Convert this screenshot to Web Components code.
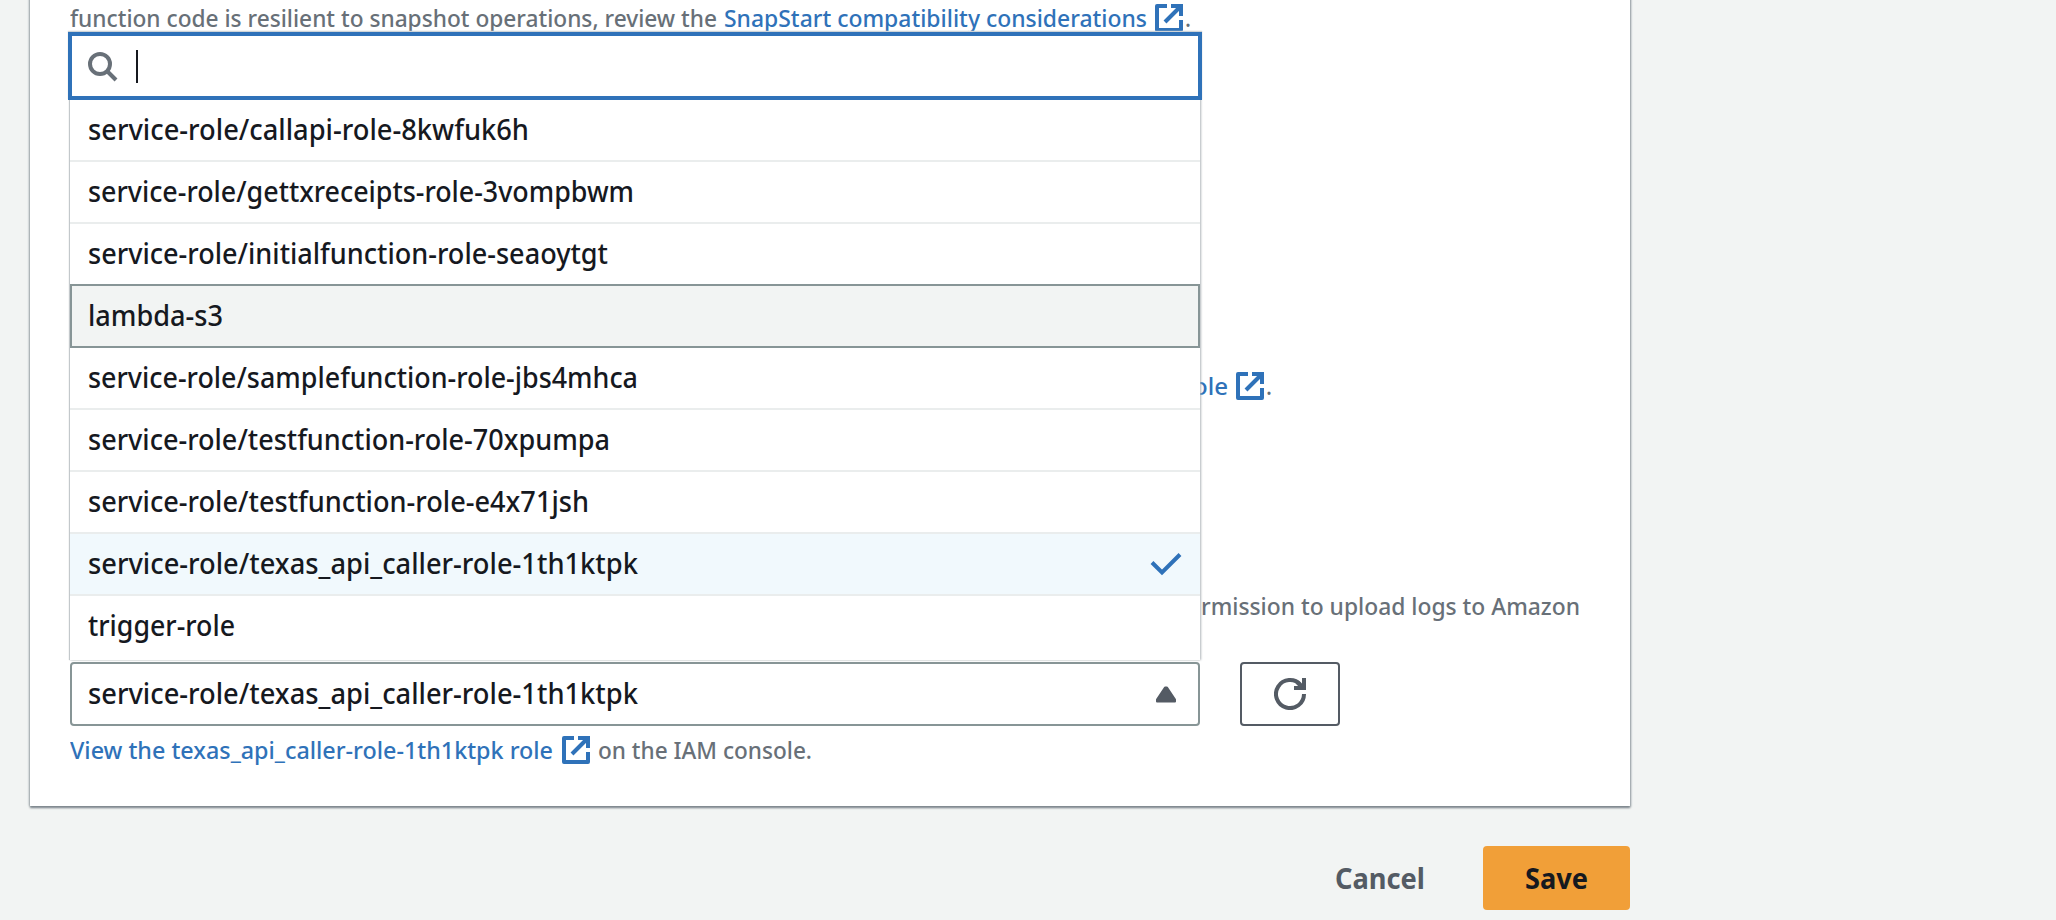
<!DOCTYPE html>
<html lang="en">
<head>
<meta charset="utf-8">
<title>Edit basic settings</title>
<style>
html,body{margin:0;height:920px;overflow:hidden;background:#f2f4f3;font-family:"Noto Sans","Open Sans",sans-serif;font-weight:500}
</style>
</head>
<body>
<settings-page></settings-page>
<script>
const define = (name, html, setup) => {
  const t = document.createElement('template');
  t.innerHTML = html;
  customElements.define(name, class extends HTMLElement {
    constructor() {
      super();
      this.attachShadow({mode: 'open'}).append(t.content.cloneNode(true));
    }
    connectedCallback() { if (setup) setup(this, this.shadowRoot); }
  });
};

// Text set to a known measure: the glyphs are condensed to the width attribute.
define('fit-text', `<style>
:host{display:inline-block;white-space:nowrap;flex:none}
span{display:inline-block;transform-origin:0 50%}
</style><span><slot></slot></span>`, (el, root) => {
  const w = +el.getAttribute('w');
  const s = root.querySelector('span');
  const n = s.getBoundingClientRect().width;
  el.style.width = w + 'px';
  if (n) s.style.transform = 'scaleX(' + w / n + ')';
});

define('icon-external', `<style>:host{display:block;flex:none;width:28px;height:28px;color:#2f72b9}svg{display:block}</style>
<svg width="28" height="28" viewBox="0 0 28 28" fill="none" stroke="currentColor" stroke-width="4"><path d="M12 2H2V26H26V16" stroke-linejoin="round"/><path d="M16 2H26V12" /><path d="M25 3L10 18"/></svg>`);
define('icon-search', `<style>:host{display:block;width:30px;height:30px;color:#687078;position:relative;top:1px}svg{display:block}</style>
<svg width="30" height="30" viewBox="0 0 30 30" fill="none" stroke="currentColor" stroke-width="4"><circle cx="12" cy="12" r="10"/><path d="M18.5 18.5L28 28"/></svg>`);
define('icon-check', `<style>:host{display:block;width:32px;height:24px;color:#2f72b9}svg{display:block}</style>
<svg width="32" height="24" viewBox="0 0 32 24" fill="none" stroke="currentColor" stroke-width="4"><path d="M2 10.5L12 20.5L30 2.5"/></svg>`);
define('icon-caret', `<style>:host{display:block;width:20px;height:17px;color:#545b64}svg{display:block}</style>
<svg width="20" height="17" viewBox="0 0 20 17" fill="currentColor" stroke="currentColor" stroke-width="2" stroke-linejoin="round"><path d="M9 1.5H11L19 13.5V15.5H1V13.5Z"/></svg>`);
define('icon-refresh', `<style>:host{display:block;width:32px;height:32px;color:#545b64}svg{display:block}</style>
<svg width="32" height="32" viewBox="0 0 32 32" fill="none" stroke="currentColor" stroke-width="4"><path d="M30 16A14 14 0 1 1 26.5 6.8"/><path d="M30 0V10H20"/><path d="M23 4L29 10"/></svg>`);

define('hint-line', `<style>
:host{display:flex;align-items:center;height:36px;font-size:24px;line-height:36px;color:#687078;white-space:nowrap}
::slotted(a){color:#2f72b9}
</style><slot></slot>`);

define('role-option', `<style>
:host{display:flex;align-items:center;justify-content:space-between;box-sizing:border-box;height:64px;margin-top:-2px;padding:0 18px;border:solid #eaeded;border-width:2px 0;font-size:28px;line-height:56px;color:#16191f;position:relative;background:#fff}
:host([first]){border-top-color:transparent}
:host([last]){border-bottom-color:transparent}
:host([selected]){background:#f1f9fd}
:host([active]){background:#f2f4f3;border:2px solid #879596;padding:0 16px;z-index:1}
.t{position:relative;top:-1px}
</style><span class="t"><slot></slot></span><slot name="icon"></slot>`);

define('role-dropdown', `<style>
:host{display:block;position:absolute;left:70px;top:32px;width:1130px;height:628px;background:#fff;box-shadow:-1px 0 1px #c3c8cb,1px 0 2px #b0b6ba}
.search{position:relative;z-index:2;box-sizing:border-box;width:1134px;height:68px;margin-left:-2px;border:4px solid #2f72b9;background:#fff;display:flex;align-items:center;padding-left:16px;gap:18px;box-shadow:0 -1px 1px #cfd4d7}
.caret{width:2px;height:33px;background:#16191f}
</style>
<div class="search"><icon-search></icon-search><div class="caret"></div></div>
<slot></slot>`);

define('role-select', `<style>
:host{display:flex;align-items:center;justify-content:space-between;box-sizing:border-box;width:1130px;height:64px;border:2px solid #879596;border-radius:4px;background:#fff;padding:0 22px 0 16px;font-size:28px;line-height:56px;color:#16191f}
.t{position:relative;top:-1px}
</style><span class="t"><slot></slot></span><icon-caret></icon-caret>`);

define('aws-button', `<style>
:host{display:flex;align-items:center;justify-content:center;box-sizing:border-box;height:64px;font-size:28px;line-height:56px;font-weight:700;color:#545b64;border-radius:4px}
:host([primary]){width:147px;background:#f19f38;color:#16191f}
:host([outline]){width:100px;border:2px solid #545b64;background:#fff}
</style><slot></slot>`);

define('settings-panel', `<style>
:host{display:block;position:relative;box-sizing:border-box;width:1600px;height:816px;margin:-10px 0 0 30px;padding:10px 40px 0;background:#fff;box-shadow:0 2px 2px #7f888e,1px 1px 2px #a5acb0,-1px 0 2px #b5babd}
</style><slot></slot>`);

define('settings-page', `<style>
:host{display:flow-root;width:2056px;height:920px;overflow:hidden;position:relative}
.intro a{margin-left:7px}
.intro icon-external,.trust icon-external{margin-left:8px}
.view icon-external{margin-left:9px}
.trust{margin-top:332px;padding-left:1123px}
.logs{margin-top:184px;padding-left:1131px}
.row{display:flex;gap:40px;margin-top:38px}
.view{margin-top:6px}
.footer{display:flex;justify-content:flex-end;width:1630px;margin-top:40px;gap:58px}
</style>
<settings-panel>
<hint-line class="intro"><fit-text w="647">function code is resilient to snapshot operations, review the</fit-text><a><fit-text w="423">SnapStart compatibility considerations</fit-text></a><icon-external></icon-external><fit-text w="6" style="margin-left:2px">.</fit-text></hint-line>
<hint-line class="trust"><a><fit-text w="35">ole</fit-text></a><icon-external></icon-external><fit-text w="6" style="margin-left:2px">.</fit-text></hint-line>
<hint-line class="logs"><fit-text w="379">rmission to upload logs to Amazon</fit-text></hint-line>
<div class="row"><role-select><fit-text w="550">service-role/texas_api_caller-role-1th1ktpk</fit-text></role-select><aws-button outline><icon-refresh></icon-refresh></aws-button></div>
<hint-line class="view"><a><fit-text w="483">View the texas_api_caller-role-1th1ktpk role</fit-text></a><icon-external></icon-external><fit-text w="214" style="margin-left:8px">on the IAM console.</fit-text></hint-line>
</settings-panel>
<role-dropdown>
<role-option first><fit-text w="441">service-role/callapi-role-8kwfuk6h</fit-text></role-option>
<role-option><fit-text w="546">service-role/gettxreceipts-role-3vompbwm</fit-text></role-option>
<role-option><fit-text w="520">service-role/initialfunction-role-seaoytgt</fit-text></role-option>
<role-option active><fit-text w="135">lambda-s3</fit-text></role-option>
<role-option><fit-text w="550">service-role/samplefunction-role-jbs4mhca</fit-text></role-option>
<role-option><fit-text w="522">service-role/testfunction-role-70xpumpa</fit-text></role-option>
<role-option><fit-text w="501">service-role/testfunction-role-e4x71jsh</fit-text></role-option>
<role-option selected><fit-text w="550">service-role/texas_api_caller-role-1th1ktpk</fit-text><icon-check slot="icon"></icon-check></role-option>
<role-option last><fit-text w="147">trigger-role</fit-text></role-option>
</role-dropdown>
<div class="footer"><aws-button><fit-text w="90">Cancel</fit-text></aws-button><aws-button primary><fit-text w="63">Save</fit-text></aws-button></div>`);
</script>
</body>
</html>
